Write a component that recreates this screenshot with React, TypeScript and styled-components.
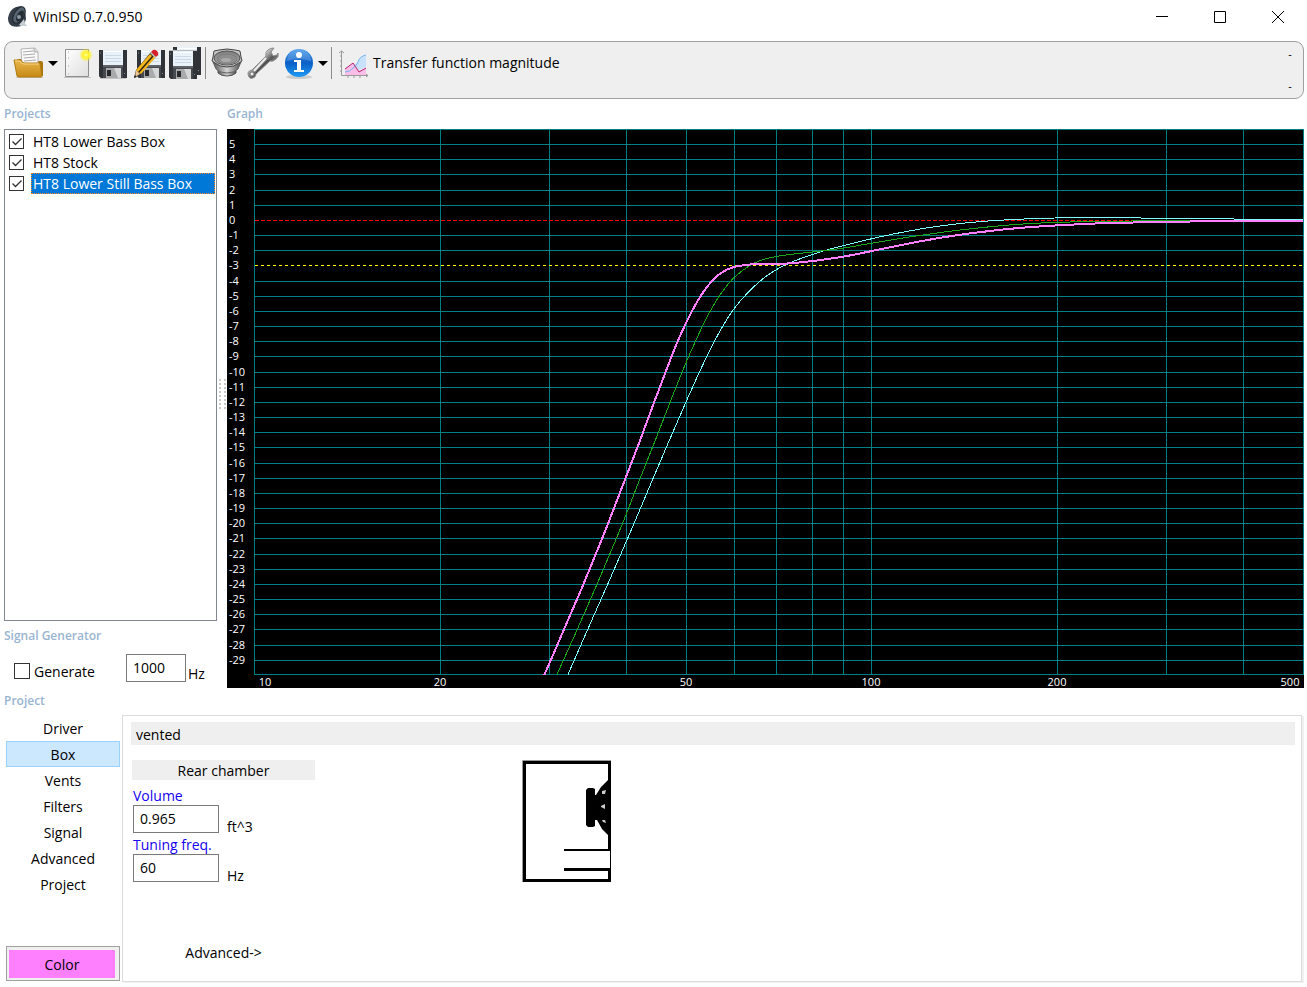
import React, { useState } from "react";
import styled, { createGlobalStyle } from "styled-components";

const GlobalStyle = createGlobalStyle`
  *, *::before, *::after { box-sizing: border-box; }
  body {
    margin: 0;
    background: #fff;
    color: #000;
    font: 14px/20px "Open Sans", "Noto Sans", sans-serif;
  }
  button, input { font: inherit; color: inherit; }
  button { padding: 0; border: 0; background: none; }
`;

const Window = styled.div`
  display: flex;
  flex-direction: column;
  min-height: 100vh;
`;

const TitleBar = styled.header`
  display: flex;
  align-items: center;
  height: 34px;
  margin-bottom: 7px;
  padding-left: 7px;
`;

const Title = styled.h1`
  flex: 1;
  margin: 0 0 0 5px;
  font-size: 14px;
  font-weight: 400;
`;

const WindowButton = styled.button`
  display: grid;
  place-items: center;
  width: 58px;
  height: 34px;
`;

const Toolbar = styled.div`
  display: flex;
  height: 58px;
  margin: 0 3px 0 4px;
  padding: 5px 10px 0 8px;
  border: 1px solid #9f9f9f;
  border-radius: 9px;
  background: #efefef;
`;

const ToolButton = styled.button<{ $joined?: boolean }>`
  height: 32px;
  margin-right: ${(p) => (p.$joined ? 0 : 4)}px;
  svg { display: block; }
`;

const CaretButton = styled.button`
  display: grid;
  place-items: center;
  width: 16px;
  height: 32px;
`;

const Separator = styled.div`
  width: 2px;
  height: 32px;
  margin-right: 4px;
  border-left: 1px solid #8c8c8c;
`;

const GraphButton = styled.button`
  display: flex;
  align-items: center;
  gap: 4px;
  height: 32px;
  line-height: 22px;
`;

const Overflow = styled.div`
  display: flex;
  flex-direction: column;
  justify-content: space-between;
  height: 46px;
  margin-left: auto;
  button { width: 6px; height: 14px; font-size: 11px; line-height: 14px; }
`;

const Main = styled.main`
  display: flex;
  margin: 0 3px 0 4px;
`;

const Sidebar = styled.aside`
  display: flex;
  flex-direction: column;
  width: 213px;
`;

const Heading = styled.h2<{ $size?: number }>`
  height: ${(p) => p.$size ?? 30}px;
  margin: 0;
  color: #99b4d1;
  font-size: 12px;
  line-height: ${(p) => p.$size ?? 30}px;
  font-weight: 600;
`;

const ProjectList = styled.ul`
  flex: 1;
  margin: 0;
  padding: 1px 1px 0 4px;
  list-style: none;
  border: 1px solid #828790;
`;

const ProjectRow = styled.li`
  display: flex;
  align-items: center;
  gap: 7px;
  height: 21px;
`;

const ProjectName = styled.label<{ $selected?: boolean }>`
  flex: 1;
  height: 21px;
  padding: 0 1px;
  line-height: 19px;
  border: 1px dotted ${(p) => (p.$selected ? "#ff8728" : "transparent")};
  background: ${(p) => (p.$selected ? "#0078d7" : "none")};
  color: ${(p) => (p.$selected ? "#fff" : "#000")};
`;

const TickWrap = styled.span`
  display: grid;
  > * { grid-area: 1 / 1; }
  svg { pointer-events: none; visibility: hidden; }
  input:checked + svg { visibility: visible; }
`;

const TickBox = styled.input<{ $size: number }>`
  appearance: none;
  width: ${(p) => p.$size}px;
  height: ${(p) => p.$size}px;
  margin: 0;
  border: 1px solid #333;
  background: #fff;
`;

const Generator = styled.div`
  display: flex;
  align-items: center;
  height: 36px;
  margin-bottom: 2px;
  padding-left: 10px;
  label { width: 96px; padding: 7px 0 0 4px; }
`;

const GeneratorTick = styled.div`
  display: flex;
  padding-top: 6px;
`;

const TextBox = styled.input<{ $width: number }>`
  width: ${(p) => p.$width}px;
  height: 28px;
  padding: 0 6px 2px;
  border: 1px solid #7a7a7a;
  background: #fff;
`;

const Unit = styled.span<{ $gap: number }>`
  padding: 12px 0 0 ${(p) => p.$gap}px;
`;

const Splitter = styled.div`
  display: flex;
  align-items: center;
  width: 10px;
  padding: 0 1px 0 2px;
  svg { display: block; }
`;

const GraphArea = styled.section`
  flex: 1;
  min-width: 0;
`;

const ChartSvg = styled.svg`
  display: block;
  width: 100%;
  height: auto;
  background: #000;
  font-size: 11px;
`;

const Bottom = styled.section`
  display: flex;
  flex: 1;
  flex-direction: column;
  margin: 0 5px 5px 4px;
`;

const BottomRow = styled.div`
  display: flex;
  flex: 1;
  margin-top: 2px;
`;

const SideNav = styled.nav`
  display: flex;
  flex-direction: column;
  width: 118px;
  padding: 0 2px 1px;
`;

const NavItem = styled.button<{ $active?: boolean }>`
  height: 26px;
  padding-top: 2px;
  border: 1px solid ${(p) => (p.$active ? "#99d1ff" : "transparent")};
  background: ${(p) => (p.$active ? "#cce8ff" : "none")};
`;

const ColorButton = styled.button`
  height: 35px;
  margin-top: auto;
  padding: 3px 4px 2px 2px;
  border: 1px solid #a0a0a0;
  background: #f0f0f0;
  span { display: block; height: 28px; background: #ff80ff; line-height: 30px; }
`;

const Panel = styled.div`
  flex: 1;
  padding: 6px 6px 18px 8px;
  border: 1px solid #dcdcdc;
  box-shadow: 2px 1px 0 #f0f0f0;
`;

const BoxType = styled.div`
  height: 23px;
  margin-bottom: 15px;
  padding-left: 5px;
  background: #efefef;
  line-height: 26px;
`;

const PanelBody = styled.div`
  display: flex;
  gap: 207px;
  padding-left: 1px;
`;

const Chamber = styled.div`
  width: 183px;
`;

const ChamberTitle = styled.h3`
  height: 20px;
  margin: 0 0 5px;
  background: #efefef;
  font-size: 14px;
  font-weight: 400;
  line-height: 22px;
  text-align: center;
`;

const Field = styled.div`
  height: 49px;
  padding-left: 1px;
  label { display: block; height: 20px; color: #1400f0; line-height: 22px; }
  div { display: flex; }
`;

const AdvancedLink = styled.button`
  display: block;
  margin: 60px auto 0;
`;

function FloppyShape() {
  return (
    <g>
      <path d="M0 1h28v28H2l-2-2z" fill="#45484d" />
      <path d="M0 1h4v28H2l-2-2zM24 1h4v28h-4z" fill="#303338" />
      <path d="M4 1h20v15H4z" fill="#e9f2f9" />
      <path d="M5 2h18v1H5z" fill="#fff" />
      <path d="M6 6.500h16M6 9.500h16M6 12.500h16" stroke="#cbd9e6" />
      <path d="M4 16h20v2H4z" fill="#5f6368" />
      <path d="M7 19h15v10H7z" fill="#a9aaab" />
      <path d="M15 19h7v10h-3z" fill="#d5d6d7" />
      <path d="M8 21h4v6H8z" fill="#26282c" />
      <path d="M25 24l1 1M1 4h1" stroke="#888" />
    </g>
  );
}

function ToolIcon({ children }: { children: React.ReactNode }) {
  return (
    <svg width="32" height="32" viewBox="0 0 32 32" aria-hidden="true">
      {children}
    </svg>
  );
}

const FolderIcon = () => (
  <ToolIcon>
    <defs>
      <linearGradient id="folder" x1="0" y1="0" x2="0" y2="1">
        <stop offset="0" stopColor="#e9b64c" />
        <stop offset="1" stopColor="#c68a14" />
      </linearGradient>
    </defs>
    <path d="M3 30h27v1H3z" fill="#c9c9c9" />
    <path d="M4 14q0-2 2-2h4l2 2h16q2 0 2 2v13H6z" fill="#a8740c" />
    <path d="M8 2l14-1 3 4v14H9z" fill="#fafafa" stroke="#b5b5b5" />
    <path d="M10 5l10-1M10 8l12-1M11 11l11-1M11 14l12-1" stroke="#aaa" />
    <path d="M21 1v4h4" fill="#ddd" stroke="#aaa" />
    <path d="M1 13h7q1 3 3 3h15q1 0 1 1l2 12q0 1-1 1H6q-2 0-2-1z" fill="url(#folder)" stroke="#b27b10" />
    <path d="M2 14h5q1 3 4 3h15" fill="none" stroke="#f7d485" />
  </ToolIcon>
);

const NewIcon = () => (
  <ToolIcon>
    <defs>
      <radialGradient id="glow">
        <stop offset="0" stopColor="#ffffb0" />
        <stop offset=".4" stopColor="#fff21c" />
        <stop offset="1" stopColor="#fff21c" stopOpacity="0" />
      </radialGradient>
      <linearGradient id="sheet" x1="0" y1="0" x2="1" y2="1">
        <stop offset="0" stopColor="#fff" />
        <stop offset="1" stopColor="#dedede" />
      </linearGradient>
    </defs>
    <path d="M3 30h27v1H3z" fill="#c4c4c4" />
    <path d="M4.500 2.500h23v27h-23z" fill="url(#sheet)" stroke="#8e8e8e" />
    <path d="M7 11h1M7 19h1M7 27h1M7 5h1" stroke="#aaa" />
    <circle cx="25" cy="8" r="7" fill="url(#glow)" />
  </ToolIcon>
);

const SaveIcon = () => (
  <ToolIcon>
    <path d="M3 31h26v1H3z" fill="#c4c4c4" />
    <g transform="translate(2 2)"><FloppyShape /></g>
  </ToolIcon>
);

const SaveAsIcon = () => (
  <ToolIcon>
    <g transform="translate(4 2)"><FloppyShape /></g>
    <path d="M18 5l5 4L7 27l-6 4 2-8z" fill="#2c2415" />
    <path d="M17 7l2 2L5 25l-2-2zM21 9l2 1L8 27l-2-1z" fill="#f4b41c" />
    <path d="M18 5l2-2q2-1 4 1t1 4l-2 2z" fill="#d9202a" />
    <path d="M17 6l1-1 5 5-1 1z" fill="#c8c8c8" />
    <path d="M3 23l4 4-5 3z" fill="#ecc994" />
    <path d="M1 31l1-3 2 2z" fill="#222" />
  </ToolIcon>
);

const SaveAllIcon = () => (
  <ToolIcon>
    <g transform="translate(4 -1)"><FloppyShape /></g>
    <path d="M0 3h28v1H0z" fill="#b9bcc0" />
    <g transform="translate(0 3)"><FloppyShape /></g>
  </ToolIcon>
);

const DriverIcon = () => (
  <ToolIcon>
    <defs>
      <linearGradient id="basket" x1="0" y1="0" x2="1" y2="0">
        <stop offset="0" stopColor="#555" />
        <stop offset=".5" stopColor="#d5d5d5" />
        <stop offset="1" stopColor="#4c4c4c" />
      </linearGradient>
      <radialGradient id="cone" cx=".5" cy=".8" r=".8">
        <stop offset="0" stopColor="#ccc" />
        <stop offset="1" stopColor="#777" />
      </radialGradient>
    </defs>
    <path d="M7 21v5q3 3 9 3t9-3v-5z" fill="url(#basket)" stroke="#555" />
    <path d="M2 15l3 7q4 4 11 4t11-4l3-7z" fill="url(#basket)" stroke="#666" />
    <path d="M3 4l5-1q8-2 16 0l5 1 1 6 1 4-3 2q-5 4-12 4T4 16l-3-2 1-4z" fill="#c6c6c6" stroke="#444" />
    <ellipse cx="16" cy="11" rx="13" ry="7" fill="url(#cone)" stroke="#555" />
    <ellipse cx="16" cy="12" rx="10" ry="5" fill="#8d8d8d" stroke="#7c7c7c" />
    <ellipse cx="15" cy="13" rx="5" ry="2" fill="#aaa" />
  </ToolIcon>
);

const WrenchIcon = () => (
  <ToolIcon>
    <defs>
      <linearGradient id="steel" x1="0" y1="0" x2="1" y2="1">
        <stop offset=".35" stopColor="#d8d8d8" />
        <stop offset=".55" stopColor="#555" />
        <stop offset=".8" stopColor="#bbb" />
      </linearGradient>
    </defs>
    <path
      d="M19 9q-1-4 2-6 2-2 6-2l-3 4 2 4 4-1 1-2q1 4-2 6-3 3-6 2L9 27q0 3-3 4t-4-1-1-4 4-3z"
      fill="url(#steel)"
      stroke="#8a8a8a"
    />
    <path d="M19 11L7 24" stroke="#eee" strokeWidth="2" />
    <path d="M21 13L9 26" stroke="#444" />
    <circle cx="5" cy="27" r="2" fill="#efefef" stroke="#777" />
  </ToolIcon>
);

const InfoIcon = () => (
  <ToolIcon>
    <defs>
      <linearGradient id="info" x1="0" y1="0" x2="0" y2="1">
        <stop offset="0" stopColor="#3f96ea" />
        <stop offset=".5" stopColor="#0b5fc6" />
        <stop offset="1" stopColor="#1f9bf6" />
      </linearGradient>
    </defs>
    <ellipse cx="16" cy="30" rx="13" ry="2" fill="#ccc" />
    <circle cx="16" cy="16" r="14" fill="url(#info)" />
    <path d="M4 14a12 12 0 0 1 24 0q-12-4-24 0z" fill="#fff" opacity=".18" />
    <circle cx="16" cy="8" r="3" fill="#fff" />
    <path d="M11 13h7v10h3v2H11v-2h3v-8h-3z" fill="#fff" />
  </ToolIcon>
);

const GraphIcon = () => (
  <ToolIcon>
    <path d="M8 28v-6l8-6 6 8 7-3v7z" fill="#f9bfe9" />
    <path d="M16 18q4-1 5-4 2-5 8-6v12l-7 3z" fill="#c9e2fb" />
    <path d="M8 25q5 0 8-4 4-2 5-6 2-6 8-7" fill="none" stroke="#74b4f0" />
    <path d="M8 22l8-6 6 9 7-4" fill="none" stroke="#b4246e" />
    <path d="M4.500 4v24.500H31M2 6l2.500-2L7 6M29 27l2 1.500-2 1.500M3 9h1M3 14h1M3 19h1M3 24h1M11 29v2M17 29v2M23 29v2" fill="none" stroke="#9a9a9a" />
  </ToolIcon>
);

const Caret = () => (
  <svg width="10" height="5" viewBox="0 0 10 5" aria-hidden="true">
    <path d="M0 0h10L5 5z" />
  </svg>
);

const AppIcon = () => (
  <svg width="21" height="22" viewBox="0 0 21 22" aria-hidden="true">
    <path d="M1 12Q2 4 9 1l5-1 4 3 1 10-2 6q-6 3-12 1-4-2-4-8z" fill="#343d48" />
    <ellipse cx="12" cy="9" rx="5" ry="9" transform="rotate(30 12 9)" fill="#566270" stroke="#20262d" />
    <ellipse cx="13" cy="10" rx="3" ry="6" transform="rotate(30 13 10)" fill="#252c34" />
    <circle cx="12" cy="11" r="2" fill="#8b98a4" />
    <path d="M12 19l5-6 1 4 2 3h-6z" fill="#c7ced4" />
  </svg>
);

const Tick = ({ size }: { size: number }) => (
  <svg width={size} height={size} viewBox="0 0 15 15" aria-hidden="true">
    <path d="M3.500 7.500l3 3 6-6" fill="none" stroke="#333" strokeWidth="1.300" />
  </svg>
);

type Point = [number, number];

const stillLower: Point[] = [
  [544.3, 675], [557.2, 645.3], [570.5, 614.3], [583.4, 584.3], [595.8, 554], [608.2, 523.3],
  [624.8, 480], [640, 440.5], [653.3, 404.5], [667.7, 366.5], [677, 343], [686.5, 322], [695, 305.500],
  [703, 292.5], [712, 281], [721, 273], [733, 267.3], [750, 264.5], [770, 263.9], [787, 263.5],
  [813, 261], [843, 256.7], [871, 251.2], [913, 242.7], [953, 235.8], [993, 230.6], [1033, 226.9],
  [1093, 223.6], [1123, 222.700], [1166, 221.9], [1217, 221.1], [1303, 221],
];
const stock: Point[] = [
  [557, 674.5], [577.3, 629.3], [596.7, 585], [615.3, 541], [627, 512.3], [639.5, 480],
  [656.7, 436.7], [670, 402.5], [686.5, 361.5], [702, 327.2], [710, 311.5], [720, 295], [733, 278.6],
  [750, 265.3], [762, 260], [777, 256.3], [803, 253], [823, 250.8], [843, 248.2], [871, 243.3],
  [917, 235.8], [960, 230], [1000, 225.8], [1037, 223.2], [1083, 221.7], [1150, 220.8], [1190, 220.5], [1303, 220.5],
];
const lower: Point[] = [
  [568, 674.5], [587.5, 629.8], [607.7, 584.3], [626.7, 540.5], [640.8, 507.5], [652.3, 480.2],
  [668.5, 442.2], [686.2, 401.5], [700, 370.9], [712, 346], [722.5, 326.7], [733.5, 309.5], [746.7, 293.8],
  [760, 281.2], [773, 271.6], [787, 264.2], [803, 257.7], [823, 251.1], [843, 245.8], [871, 238.9],
  [900, 232.7], [933, 227], [967, 222.8], [997, 220.4], [1037, 218.5], [1070, 217.7], [1097, 217.4],
  [1133, 217.9], [1180, 218.5], [1227, 218.9], [1260, 219.4], [1303, 219.5],
];

/* Smooth path through the sampled response, one cubic per segment. */
function curve(points: Point[]) {
  const at = (i: number) => points[Math.max(0, Math.min(points.length - 1, i))];
  const slope = (a: Point, b: Point) => (b[1] - a[1]) / (b[0] - a[0]);
  let d = `M${points[0][0]} ${points[0][1]}`;
  for (let i = 0; i < points.length - 1; i++) {
    const p = at(i);
    const q = at(i + 1);
    const w = (q[0] - p[0]) / 3;
    const s0 = slope(at(i - 1), q);
    const s1 = slope(p, at(i + 2));
    d += `C${p[0] + w} ${p[1] + w * s0} ${q[0] - w} ${q[1] - w * s1} ${q[0]} ${q[1]}`;
  }
  return d;
}

const LEFT = 254;
const RIGHT = 1303;
const TOP = 129;
const BOTTOM = 674;
const freqX = (f: number) => Math.floor(LEFT + 0.5 + 617.4 * Math.log10(f / 10));
const gainY = (db: number) => Math.floor(220.4 - 15.17 * db);
const freqs = [20, 30, 40, 50, 60, 70, 80, 90, 100, 200, 300, 400];
const gains = Array.from({ length: 35 }, (_, i) => 5 - i);
const freqLabels: [string, number][] = [
  ["10", 265], ["20", 440], ["50", 686], ["100", 871], ["200", 1057], ["500", 1290],
];

function ResponseChart() {
  return (
    <ChartSvg viewBox="227 129 1077 559" role="img" aria-label="Transfer function magnitude in dB against frequency in Hz">
      <g shapeRendering="crispEdges" fill="none">
        <g stroke="#008080">
          {gains.filter((g) => g !== 0 && g !== -3).map((g) => (
            <path key={g} d={`M${LEFT} ${gainY(g) + 0.5}H${RIGHT}`} />
          ))}
          {freqs.map((f) => (
            <path key={f} d={`M${freqX(f) + 0.5} ${TOP}V${BOTTOM}`} />
          ))}
          <path d={`M${LEFT + 0.5} ${TOP + 0.5}H${RIGHT + 0.5}V${BOTTOM + 0.5}H${LEFT + 0.5}z`} />
        </g>
        <path d={`M${LEFT + 1} ${gainY(0) + 0.5}H${RIGHT}`} stroke="#f00" strokeDasharray="4 2" />
        <path d={`M${LEFT + 1} ${gainY(-3) + 0.5}H${RIGHT}`} stroke="#ff0" strokeDasharray="3 3" />
        <path d={curve(lower)} stroke="#80ffff" />
        <path d={curve(stock)} stroke="#18a818" />
        <path d={curve(stillLower)} stroke="#ff80ff" strokeWidth="2" />
      </g>
      <g fill="#fff">
        {gains.map((g) => (
          <text key={g} x="229" y={gainY(g) + 4}>{g}</text>
        ))}
        {freqLabels.map(([label, x]) => (
          <text key={label} x={x} y="686" textAnchor="middle">{label}</text>
        ))}
      </g>
    </ChartSvg>
  );
}

const BoxDrawing = () => (
  <svg width="89" height="122" viewBox="0 0 89 122" role="img" aria-label="Vented box">
    <path d="M.5 122V.5H89" fill="none" stroke="#999" />
    <path d="M1 1h88v89H86V4H4v115h82v-8h3v11H1z" />
    <path d="M42 89h47v2H42zM42 108h47v3H42zM88 89h1v22h-1z" />
    <path d="M66 28h5l2 1v6h1l5-8 7-7h1v55h-1l-6-6-5-9h-2v6l-2 1h-5l-2-2V30z" />
    <path d="M80 31l4-1-1 4h-3zM79 46l4-2v5l-4-2zM80 60h3l1 3-3-1z" fill="#ccc" />
  </svg>
);

const projects = ["HT8 Lower Bass Box", "HT8 Stock", "HT8 Lower Still Bass Box"];
const sections = ["Driver", "Box", "Vents", "Filters", "Signal", "Advanced", "Project"];

function NumberField({ id, label, value, unit }: { id: string; label: string; value: string; unit: string }) {
  return (
    <Field>
      <label htmlFor={id}>{label}</label>
      <div>
        <TextBox id={id} $width={86} defaultValue={value} />
        <Unit $gap={8}>{unit}</Unit>
      </div>
    </Field>
  );
}

export default function App() {
  const [section, setSection] = useState("Box");
  return (
    <Window>
      <GlobalStyle />
      <TitleBar>
        <AppIcon />
        <Title>WinISD 0.7.0.950</Title>
        <WindowButton aria-label="Minimize">
          <svg width="12" height="12"><path d="M0 5.500h12" stroke="#000" /></svg>
        </WindowButton>
        <WindowButton aria-label="Maximize">
          <svg width="12" height="12"><path d="M.5.5h11v11H.5z" fill="none" stroke="#000" /></svg>
        </WindowButton>
        <WindowButton aria-label="Close">
          <svg width="12" height="12"><path d="M0 0l12 12M12 0L0 12" stroke="#000" /></svg>
        </WindowButton>
      </TitleBar>

      <Toolbar role="toolbar">
        <ToolButton $joined aria-label="Open"><FolderIcon /></ToolButton>
        <CaretButton aria-label="Open recent"><Caret /></CaretButton>
        <ToolButton aria-label="New project"><NewIcon /></ToolButton>
        <ToolButton aria-label="Save"><SaveIcon /></ToolButton>
        <ToolButton aria-label="Save as"><SaveAsIcon /></ToolButton>
        <ToolButton aria-label="Save all"><SaveAllIcon /></ToolButton>
        <Separator />
        <ToolButton aria-label="Drivers"><DriverIcon /></ToolButton>
        <ToolButton aria-label="Options"><WrenchIcon /></ToolButton>
        <ToolButton $joined aria-label="About"><InfoIcon /></ToolButton>
        <CaretButton aria-label="Help menu"><Caret /></CaretButton>
        <Separator />
        <GraphButton><GraphIcon />Transfer function magnitude</GraphButton>
        <Overflow>
          <button>-</button>
          <button>-</button>
        </Overflow>
      </Toolbar>

      <Main>
        <Sidebar>
          <Heading>Projects</Heading>
          <ProjectList>
            {projects.map((name, i) => (
              <ProjectRow key={name}>
                <TickWrap>
                  <TickBox id={`project-${i}`} type="checkbox" $size={15} defaultChecked />
                  <Tick size={15} />
                </TickWrap>
                <ProjectName htmlFor={`project-${i}`} $selected={i === 2}>{name}</ProjectName>
              </ProjectRow>
            ))}
          </ProjectList>
          <Heading $size={29}>Signal Generator</Heading>
          <Generator>
            <GeneratorTick>
              <TickWrap>
                <TickBox id="generate" type="checkbox" $size={16} />
                <Tick size={16} />
              </TickWrap>
            </GeneratorTick>
            <label htmlFor="generate">Generate</label>
            <TextBox $width={60} defaultValue="1000" aria-label="Generator frequency" />
            <Unit $gap={2}>Hz</Unit>
          </Generator>
        </Sidebar>
        <Splitter>
          <svg width="7" height="30" aria-hidden="true">
            {Array.from({ length: 8 }, (_, i) => (
              <path key={i} d={`M0 ${i * 4}h2v2H0zM5 ${i * 4}h2v2H5z`} fill="#c8c8c8" />
            ))}
          </svg>
        </Splitter>
        <GraphArea>
          <Heading>Graph</Heading>
          <ResponseChart />
        </GraphArea>
      </Main>

      <Bottom>
        <Heading $size={25}>Project</Heading>
        <BottomRow>
          <SideNav>
            {sections.map((name) => (
              <NavItem key={name} $active={name === section} onClick={() => setSection(name)}>{name}</NavItem>
            ))}
            <ColorButton><span>Color</span></ColorButton>
          </SideNav>
          <Panel>
            <BoxType>vented</BoxType>
            <PanelBody>
              <Chamber>
                <ChamberTitle>Rear chamber</ChamberTitle>
                <NumberField id="volume" label="Volume" value="0.965" unit="ft^3" />
                <NumberField id="tuning" label="Tuning freq." value="60" unit="Hz" />
                <AdvancedLink>Advanced-&gt;</AdvancedLink>
              </Chamber>
              <BoxDrawing />
            </PanelBody>
          </Panel>
        </BottomRow>
      </Bottom>
    </Window>
  );
}
